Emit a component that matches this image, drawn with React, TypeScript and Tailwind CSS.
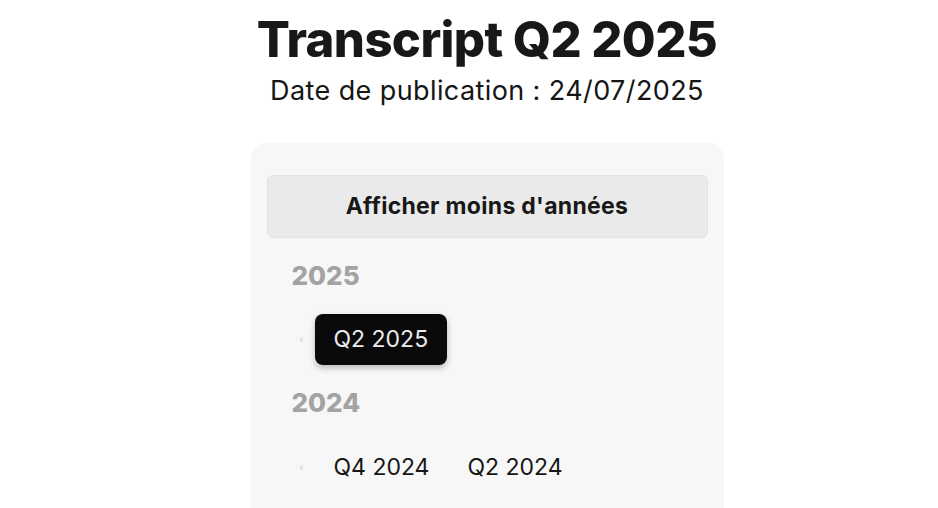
import React from "react";

function Dot() {
  return <span className="inline-block w-[3px] h-[5px] bg-[#e4e4e4] rounded-[1px] ml-[8px] mr-[12px]" />;
}

export default function App() {
  return (
    <div className="min-h-[508px] bg-white flex flex-col items-center pl-[36px] text-[#161616]" style={{ fontFamily: "Inter, 'Noto Sans', sans-serif" }}>
      <h1 className="mt-[11px] text-[49px] leading-[58px] font-extrabold tracking-[-0.6px] text-[#181818]">Transcript Q2 2025</h1>
      <p className="mt-[6px] text-[27px] leading-[32px] tracking-[0.4px] text-[#161616]">Date de publication : 24/07/2025</p>
      <div className="mt-[36px] w-[473px] bg-[#f7f7f7] rounded-t-[16px] px-[16px] pt-[32px] pb-[40px]">
        <button className="w-full h-[63px] bg-[#eaeaea] border border-[#e2e2e2] rounded-[6px] text-[23px] tracking-[0.3px] font-bold text-[#181818]">
          Afficher moins d'années
        </button>
        <div className="px-[25px] mt-[22px]">
          <div className="text-[26px] font-extrabold text-[#a3a3a3] leading-[32px]">2025</div>
          <div className="flex items-center mt-[22px]">
            <Dot />
            <span className="h-[51px] px-[19px] flex items-center bg-[#0a0a0c] text-[#ececec] text-[23px] rounded-[8px] shadow-[0_3px_6px_rgba(0,0,0,0.25)]">Q2 2025</span>
          </div>
          <div className="text-[26px] font-extrabold text-[#a3a3a3] leading-[32px] mt-[22px]">2024</div>
          <div className="flex items-center mt-[23px]">
            <Dot />
            <span className="h-[51px] px-[19px] flex items-center text-[23px]">Q4 2024</span>
            <span className="h-[51px] px-[19px] flex items-center text-[23px]">Q2 2024</span>
          </div>
        </div>
      </div>
    </div>
  );
}
